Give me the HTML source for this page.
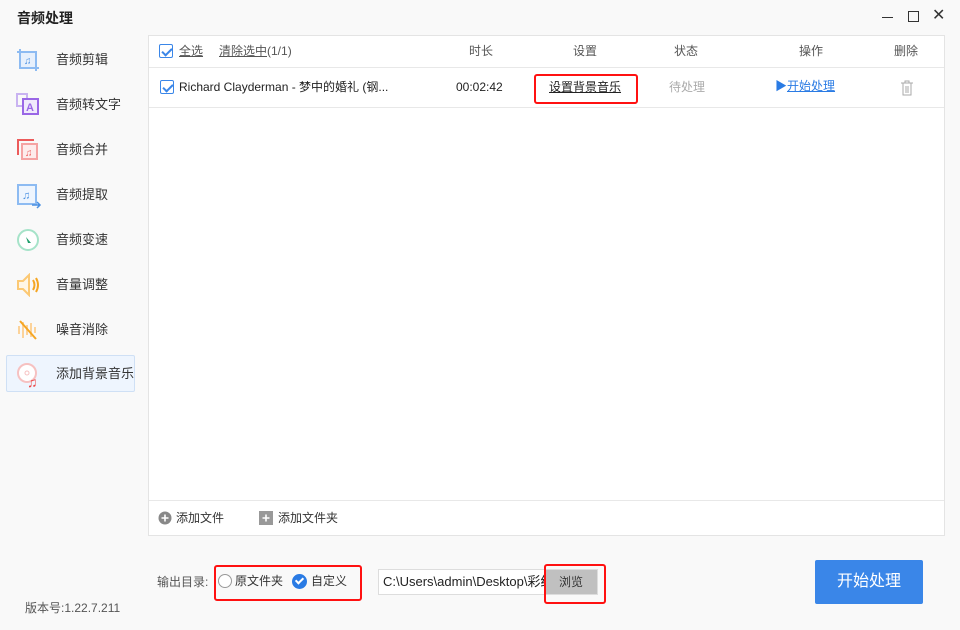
<!DOCTYPE html>
<html><head><meta charset="utf-8"><style>
*{margin:0;padding:0;box-sizing:border-box}
body{width:960px;height:630px;background:#f9f9f9;font-family:"Liberation Sans","Noto Sans CJK SC",sans-serif;font-size:13px;line-height:16px;color:#333;position:relative;overflow:hidden}
.abs{position:absolute;white-space:nowrap}
.title{left:17px;top:10px;font-size:14px;font-weight:bold;color:#222}
.side .it{position:absolute;left:6px;width:129px;height:37px;}
.side .it span{position:absolute;left:50px;top:11px;font-size:13px;color:#333;white-space:nowrap}
.side .it svg{position:absolute;left:10px;top:7px}
.sel{background:#eef5fe;border:1px solid #cfe0f5;border-radius:2px}
.panel{left:148px;top:35px;width:797px;height:501px;background:#fff;border:1px solid #e4e4e4;font-size:12px}
.cb{position:absolute;width:14px;height:14px;border:1px solid #3a86e8;border-radius:2px;background:#fff}
.cb:after{content:"";position:absolute;left:4px;top:1px;width:4px;height:8px;border:solid #3a86e8;border-width:0 2px 2px 0;transform:rotate(45deg)}
u{text-decoration:underline}
.red{position:absolute;border:2px solid #f11;border-radius:3px}
</style></head><body>
<div class="abs title">音频处理</div>
<div class="abs" style="left:882px;top:17px;width:11px;height:1px;background:#333"></div>
<div class="abs" style="left:908px;top:11px;width:11px;height:11px;border:1px solid #333"></div>
<div class="abs" style="left:932px;top:8px;font-size:16px;color:#333">✕</div>

<div class="side">
<div class="it" style="top:41px"><svg width="24" height="24"><rect x="4" y="4" width="16" height="16" fill="#e7f0fc" stroke="#8dbbf2" stroke-width="2"/><path d="M1 4h3M20 23v-3M4 1v3M23 20h-3" stroke="#8dbbf2" stroke-width="2"/><text x="8" y="16" font-size="10" fill="#4a90e2">♫</text></svg><span>音频剪辑</span></div>
<div class="it" style="top:86px"><svg width="24" height="24"><rect x="1" y="1" width="10" height="12" fill="none" stroke="#c9b3f1" stroke-width="2"/><rect x="7" y="6" width="15" height="15" fill="#f0eafc" stroke="#9a67e6" stroke-width="2"/><text x="10" y="18" font-size="11" font-weight="bold" fill="#9a67e6" font-family="Liberation Sans">A</text></svg><span>音频转文字</span></div>
<div class="it" style="top:131px"><svg width="24" height="24"><path d="M2 17V2h16" stroke="#ec5b5b" stroke-width="2" fill="none"/><rect x="6" y="6" width="15" height="15" fill="#fdecec" stroke="#f5a3a3" stroke-width="2"/><text x="9" y="18" font-size="10" fill="#ec5b5b">♫</text></svg><span>音频合并</span></div>
<div class="it" style="top:176px"><svg width="26" height="26"><rect x="2" y="2" width="18" height="19" fill="#eef5fe" stroke="#8dbbf2" stroke-width="2"/><text x="6" y="16" font-size="11" fill="#4a90e2">♫</text><path d="M16 22h8M21 19l3 3-3 3" stroke="#4a90e2" stroke-width="1.5" fill="none"/></svg><span>音频提取</span></div>
<div class="it" style="top:221px"><svg width="24" height="24"><circle cx="12" cy="12" r="10" fill="#fff" stroke="#a6e3c9" stroke-width="2"/><path d="M10 9l5 6-3 0z" fill="#1e9e6b"/></svg><span>音频变速</span></div>
<div class="it" style="top:266px"><svg width="26" height="24"><path d="M2 8h5l6-6v20l-6-6H2z" fill="#fff6e6" stroke="#fcc974" stroke-width="2"/><path d="M17 7q3 5 0 10M20 5q4 7 0 14" stroke="#f5a623" stroke-width="2" fill="none"/></svg><span>音量调整</span></div>
<div class="it" style="top:311px"><svg width="24" height="24"><path d="M3 8v8M7 4v16M11 7v10M15 5v14M19 9v6" stroke="#fcd39a" stroke-width="2"/><path d="M4 3l16 18" stroke="#f5a623" stroke-width="2"/></svg><span>噪音消除</span></div>
<div class="it sel" style="top:355px"><svg width="26" height="26" style="left:9px;top:6px"><circle cx="11" cy="11" r="9" fill="#fff" stroke="#f6c1c1" stroke-width="2"/><circle cx="11" cy="11" r="2" fill="none" stroke="#f6c1c1"/><text x="11" y="25" font-size="14" fill="#ec4848">♫</text></svg><span style="left:49px;top:10px">添加背景音乐</span></div>
</div>
<div class="abs" style="left:25px;top:600px;font-size:12px;color:#555">版本号:1.22.7.211</div>

<div class="abs panel">
 <div class="abs" style="left:0;top:31px;width:795px;height:1px;background:#e8e8e8"></div>
 <div class="abs" style="left:0;top:71px;width:795px;height:1px;background:#e8e8e8"></div>
 <div class="abs" style="left:0;top:464px;width:795px;height:1px;background:#e8e8e8"></div>
 <div class="cb" style="left:10px;top:8px"></div>
 <div class="abs" style="left:30px;top:7px;color:#555"><u>全选</u></div>
 <div class="abs" style="left:70px;top:7px;color:#555"><u>清除选中</u>(1/1)</div>
 <div class="abs" style="left:320px;top:7px;color:#555">时长</div>
 <div class="abs" style="left:424px;top:7px;color:#555">设置</div>
 <div class="abs" style="left:525px;top:7px;color:#555">状态</div>
 <div class="abs" style="left:650px;top:7px;color:#555">操作</div>
 <div class="abs" style="left:745px;top:7px;color:#555">删除</div>
 <div class="cb" style="left:11px;top:44px"></div>
 <div class="abs" style="left:30px;top:43px;color:#222">Richard Clayderman - 梦中的婚礼 (钢...</div>
 <div class="abs" style="left:307px;top:43px;color:#222">00:02:42</div>
 <div class="abs" style="left:400px;top:43px;color:#222"><u>设置背景音乐</u></div>
 <div class="abs" style="left:520px;top:43px;color:#aaa">待处理</div>
 <div class="abs" style="left:626px;top:42px;color:#2a7be4">▶<u>开始处理</u></div>
 <svg class="abs" style="left:750px;top:43px" width="16" height="18"><path d="M2 4h12M6 4V2h4v2M4 4v12h8V4M7 7v7M9 7v7" stroke="#aaa" fill="none"/></svg>
 <svg class="abs" style="left:9px;top:475px" width="14" height="14"><circle cx="7" cy="7" r="6.5" fill="#888"/><path d="M7 3.5v7M3.5 7h7" stroke="#fff" stroke-width="1.6"/></svg>
 <div class="abs" style="left:27px;top:474px">添加文件</div>
 <svg class="abs" style="left:110px;top:475px" width="14" height="14"><rect width="14" height="14" fill="#999"/><path d="M7 3.5v7M3.5 7h7" stroke="#fff" stroke-width="1.6"/></svg>
 <div class="abs" style="left:129px;top:474px">添加文件夹</div>
</div>
<div class="red" style="left:534px;top:74px;width:104px;height:30px"></div>

<div class="abs" style="left:157px;top:574px;font-size:12px;color:#555">输出目录:</div>
<div class="abs" style="left:218px;top:574px;width:14px;height:14px;border:1px solid #999;border-radius:50%;background:#fff"></div>
<div class="abs" style="left:235px;top:573px;font-size:12px">原文件夹</div>
<div class="abs" style="left:292px;top:574px;width:15px;height:15px;border-radius:50%;background:#2a7be4"></div>
<div class="abs" style="left:297px;top:576px;width:5px;height:8px;border:solid #fff;border-width:0 2px 2px 0;transform:rotate(45deg)"></div>
<div class="abs" style="left:311px;top:573px;font-size:12px">自定义</div>
<div class="red" style="left:214px;top:565px;width:148px;height:36px"></div>
<div class="abs" style="left:378px;top:569px;width:220px;height:26px;border:1px solid #ddd;background:#fff;overflow:hidden"><div style="position:absolute;left:4px;top:4px;white-space:nowrap;color:#222;font-size:13px">C:\Users\admin\Desktop\彩红</div></div>
<div class="abs" style="left:545px;top:570px;width:52px;height:24px;background:#c0c0c0;text-align:center;line-height:24px;font-size:12px">浏览</div>
<div class="red" style="left:544px;top:564px;width:62px;height:40px"></div>
<div class="abs" style="left:815px;top:560px;width:108px;height:44px;background:#3a86e8;border-radius:2px;color:#fff;font-size:16px;text-align:center;line-height:44px">开始处理</div>
</body></html>
